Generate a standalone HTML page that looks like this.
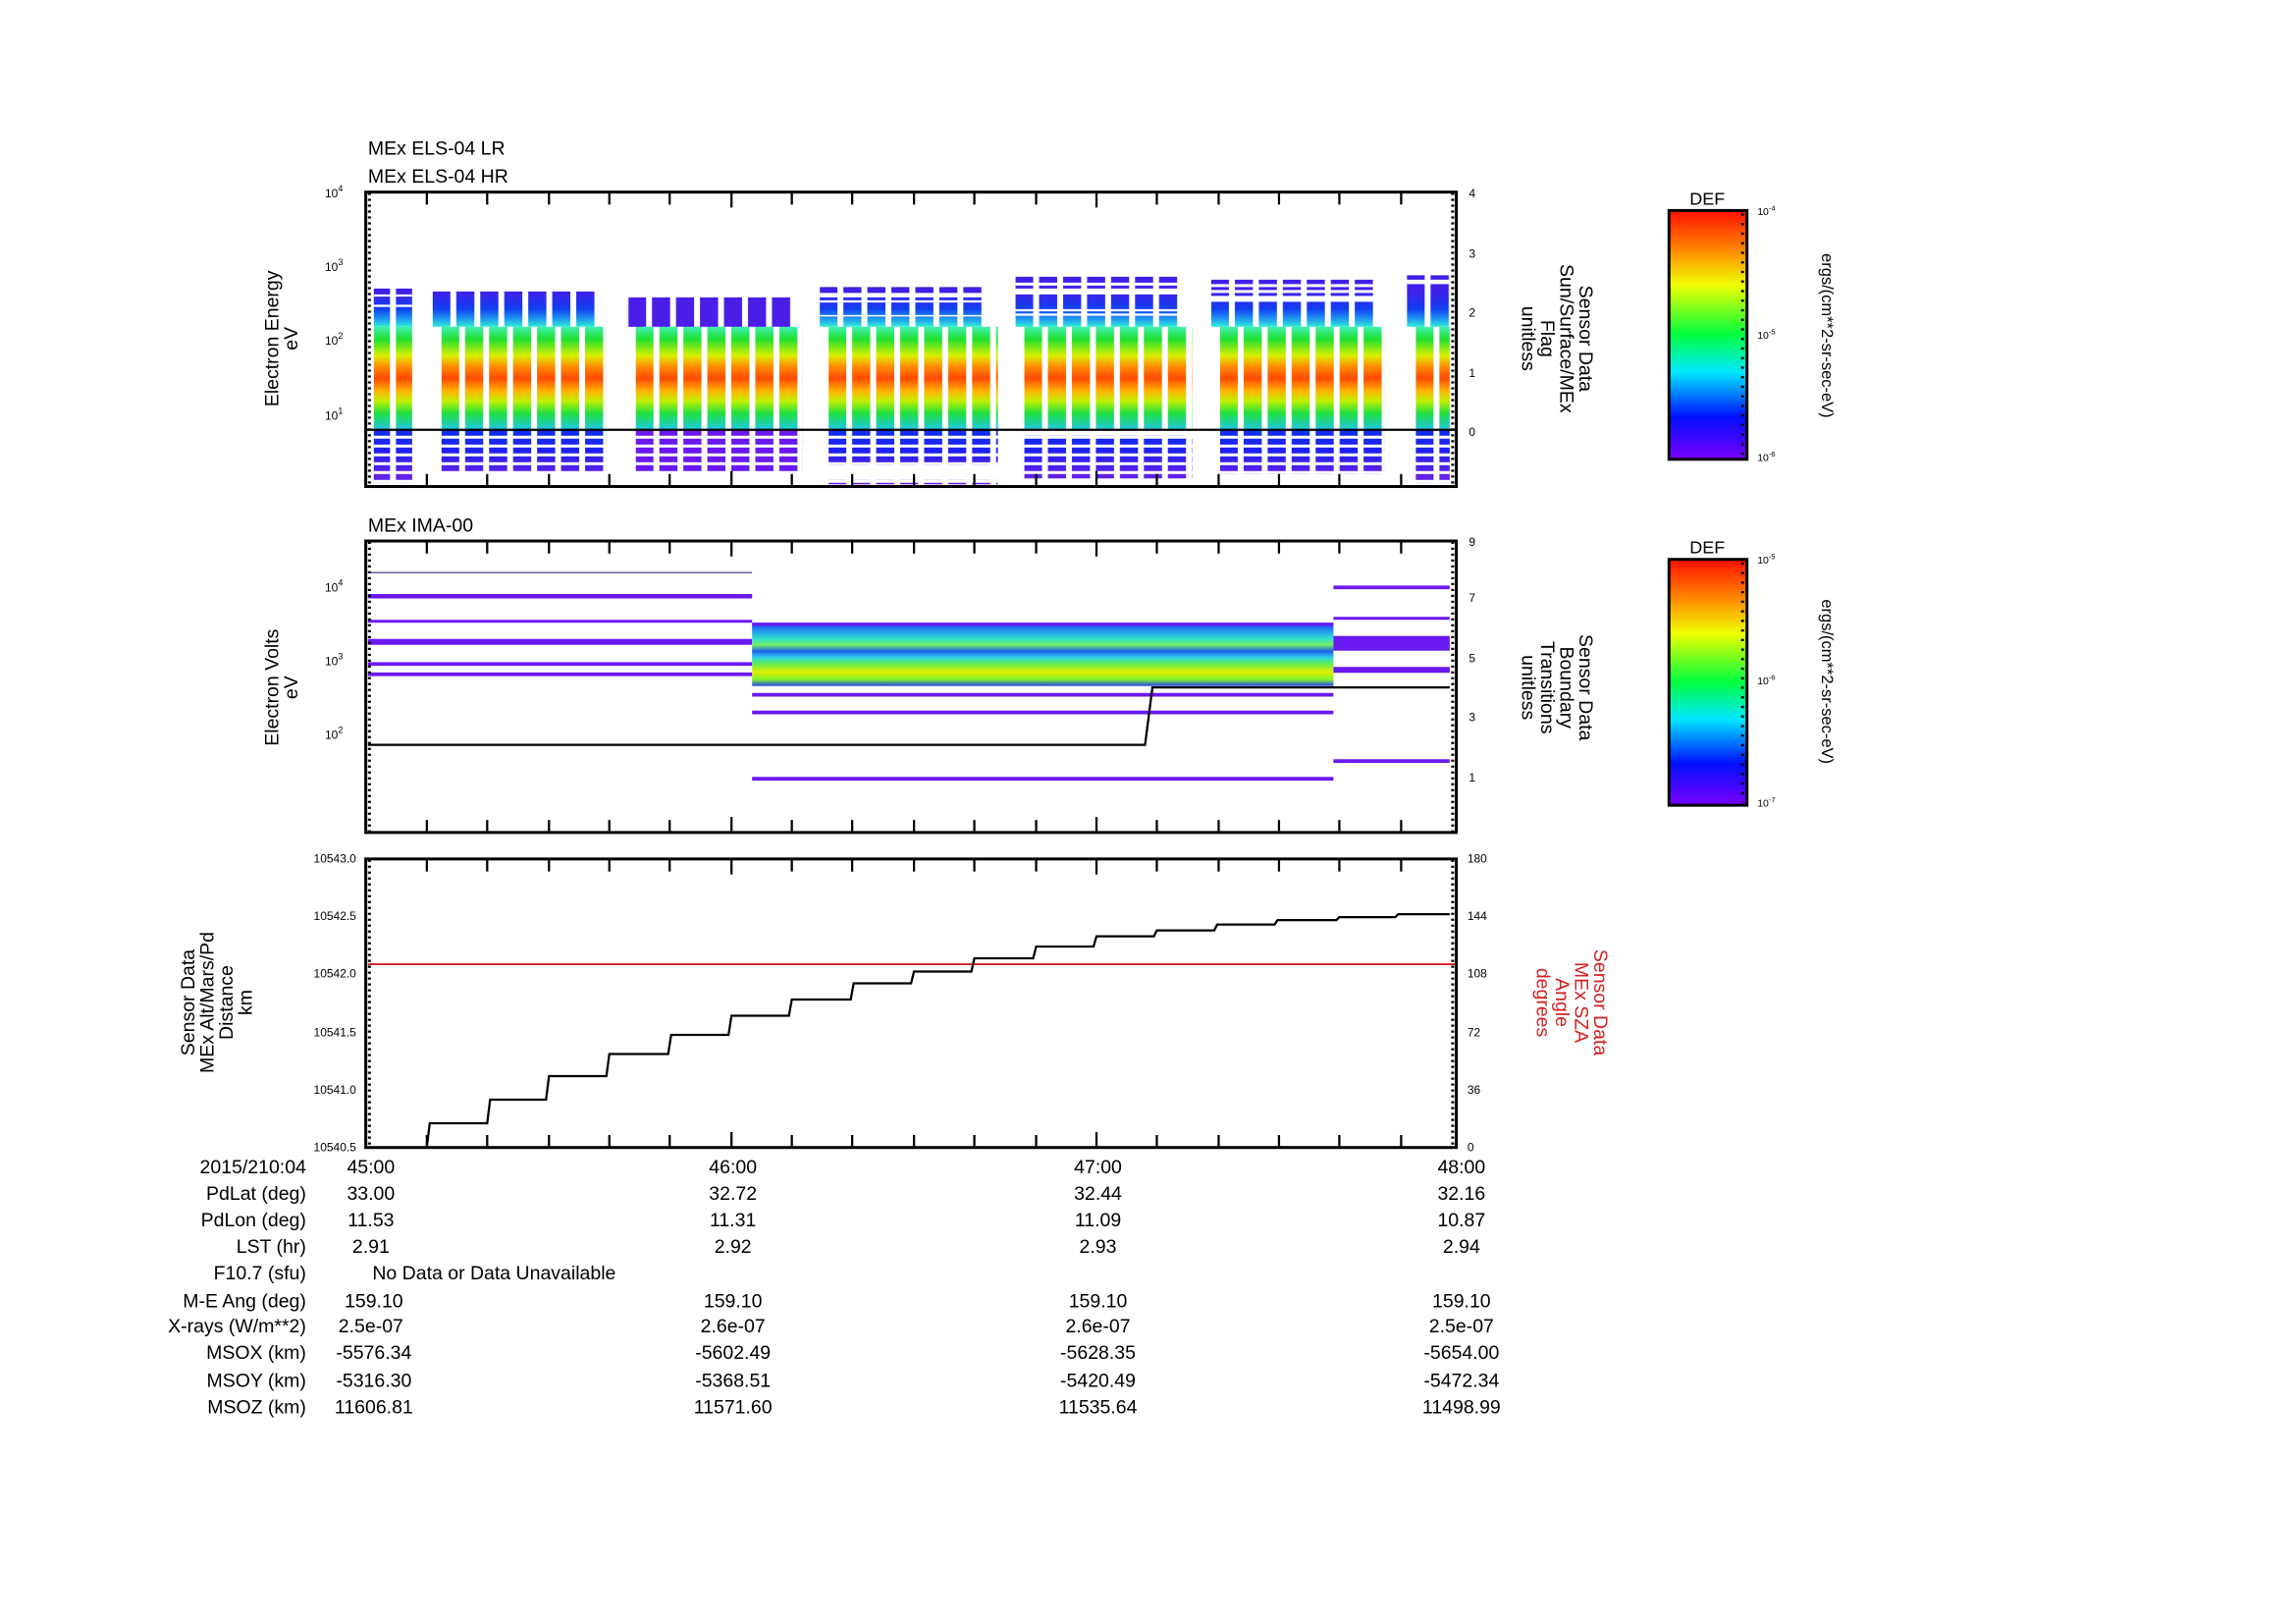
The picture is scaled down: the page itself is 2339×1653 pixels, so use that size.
<!DOCTYPE html>
<html><head><meta charset="utf-8"><style>
html,body{margin:0;padding:0;background:#fff;}
svg{display:block;}
text{font-family:"Liberation Sans",sans-serif;fill:#000;}
</style></head><body>
<svg width="2339" height="1653" viewBox="0 0 1560 1102.5" xmlns="http://www.w3.org/2000/svg">
<defs>
<linearGradient id="low" x1="0" y1="222" x2="0" y2="292" gradientUnits="userSpaceOnUse">
<stop offset="0" stop-color="#3ff0b0"/><stop offset="0.12" stop-color="#20e030"/><stop offset="0.28" stop-color="#d8f000"/><stop offset="0.38" stop-color="#ff9000"/><stop offset="0.5" stop-color="#ff4a00"/><stop offset="0.62" stop-color="#ffb000"/><stop offset="0.72" stop-color="#c0f000"/><stop offset="0.84" stop-color="#20e040"/><stop offset="1" stop-color="#20c8e8"/>
</linearGradient>
<linearGradient id="up" x1="0" y1="198" x2="0" y2="222" gradientUnits="userSpaceOnUse">
<stop offset="0" stop-color="#4020e8"/><stop offset="0.5" stop-color="#1040f0"/><stop offset="0.8" stop-color="#20a0f0"/><stop offset="1" stop-color="#30f0d0"/>
</linearGradient>
<linearGradient id="dn" x1="0" y1="292" x2="0" y2="322" gradientUnits="userSpaceOnUse">
<stop offset="0" stop-color="#1030f0"/><stop offset="0.5" stop-color="#2020f0"/><stop offset="1" stop-color="#6020e8"/>
</linearGradient>
<linearGradient id="mid" x1="0" y1="423" x2="0" y2="466" gradientUnits="userSpaceOnUse">
<stop offset="0" stop-color="#2030f0"/><stop offset="0.12" stop-color="#2090f0"/><stop offset="0.25" stop-color="#30e0d0"/><stop offset="0.35" stop-color="#70f060"/><stop offset="0.45" stop-color="#2060f0"/><stop offset="0.55" stop-color="#30d0e8"/><stop offset="0.65" stop-color="#60f050"/><stop offset="0.78" stop-color="#e0f000"/><stop offset="0.9" stop-color="#80f030"/><stop offset="1" stop-color="#2040f0"/>
</linearGradient>
<linearGradient id="cb" x1="0" y1="1" x2="0" y2="0">
<stop offset="0" stop-color="#7a00ff"/><stop offset="0.17" stop-color="#0010ff"/><stop offset="0.35" stop-color="#00e8ff"/><stop offset="0.5" stop-color="#00ff40"/><stop offset="0.7" stop-color="#f0ff00"/><stop offset="0.85" stop-color="#ff8000"/><stop offset="1" stop-color="#ff1000"/>
</linearGradient>
<pattern id="v1" x="254" y="0" width="16.3" height="10" patternUnits="userSpaceOnUse"><rect x="11" y="0" width="4" height="10" fill="#fff"/></pattern>
<pattern id="v2" x="294" y="0" width="16.3" height="10" patternUnits="userSpaceOnUse"><rect x="12" y="0" width="4" height="10" fill="#fff"/></pattern>
<pattern id="v3" x="300" y="0" width="16.3" height="10" patternUnits="userSpaceOnUse"><rect x="12" y="0" width="4" height="10" fill="#fff"/></pattern>
<pattern id="v4" x="427" y="0" width="16.3" height="10" patternUnits="userSpaceOnUse"><rect x="12" y="0" width="4" height="10" fill="#fff"/></pattern>
<pattern id="v5" x="432" y="0" width="16.3" height="10" patternUnits="userSpaceOnUse"><rect x="12" y="0" width="4" height="10" fill="#fff"/></pattern>
<pattern id="v6" x="557" y="0" width="16.3" height="10" patternUnits="userSpaceOnUse"><rect x="12" y="0" width="4" height="10" fill="#fff"/></pattern>
<pattern id="v7" x="563" y="0" width="16.3" height="10" patternUnits="userSpaceOnUse"><rect x="12" y="0" width="4" height="10" fill="#fff"/></pattern>
<pattern id="v8" x="690" y="0" width="16.3" height="10" patternUnits="userSpaceOnUse"><rect x="12" y="0" width="4" height="10" fill="#fff"/></pattern>
<pattern id="v9" x="696" y="0" width="16.3" height="10" patternUnits="userSpaceOnUse"><rect x="12" y="0" width="4" height="10" fill="#fff"/></pattern>
<pattern id="v10" x="823" y="0" width="16.3" height="10" patternUnits="userSpaceOnUse"><rect x="12" y="0" width="4" height="10" fill="#fff"/></pattern>
<pattern id="v11" x="829" y="0" width="16.3" height="10" patternUnits="userSpaceOnUse"><rect x="12" y="0" width="4" height="10" fill="#fff"/></pattern>
<pattern id="v12" x="956" y="0" width="16.3" height="10" patternUnits="userSpaceOnUse"><rect x="12" y="0" width="4" height="10" fill="#fff"/></pattern>
<pattern id="v13" x="962" y="0" width="16.3" height="10" patternUnits="userSpaceOnUse"><rect x="12" y="0" width="4" height="10" fill="#fff"/></pattern>
<pattern id="hg" x="0" y="292" width="10" height="6" patternUnits="userSpaceOnUse"><rect x="0" y="4" width="10" height="2" fill="#fff"/></pattern>
</defs>

<!-- Panel 1 -->
<text x="250" y="105" font-size="13">MEx ELS-04 LR</text>
<text x="250" y="124" font-size="13">MEx ELS-04 HR</text>
<g>
<rect x="254" y="222" width="26" height="70" fill="url(#low)"/>
<rect x="254" y="196" width="26" height="26" fill="url(#up)"/>
<rect x="254" y="292" width="26" height="36" fill="url(#dn)"/>
<rect x="300" y="222" width="112" height="70" fill="url(#low)"/>
<rect x="294" y="198" width="110" height="24" fill="url(#up)"/>
<rect x="300" y="292" width="112" height="29" fill="url(#dn)"/>
<rect x="432" y="222" width="113" height="70" fill="url(#low)"/>
<rect x="427" y="202" width="110" height="20" fill="#4a1ee8"/>
<rect x="432" y="292" width="113" height="29" fill="#6a18f0"/>
<rect x="563" y="222" width="115" height="70" fill="url(#low)"/>
<rect x="557" y="195" width="110" height="27" fill="url(#up)"/>
<rect x="563" y="292" width="115" height="24" fill="url(#dn)"/>
<rect x="563" y="326" width="115" height="3" fill="#6a18f0"/>
<rect x="696" y="222" width="114" height="70" fill="url(#low)"/>
<rect x="690" y="188" width="110" height="34" fill="url(#up)"/>
<rect x="696" y="296" width="114" height="29" fill="url(#dn)"/>
<rect x="829" y="222" width="112" height="70" fill="url(#low)"/>
<rect x="823" y="190" width="110" height="32" fill="url(#up)"/>
<rect x="829" y="292" width="112" height="30" fill="url(#dn)"/>
<rect x="962" y="222" width="23" height="70" fill="url(#low)"/>
<rect x="956" y="187" width="29" height="35" fill="url(#up)"/>
<rect x="962" y="292" width="23" height="36" fill="url(#dn)"/>
<!-- upper band gaps -->
<g fill="#fff">
<rect x="254" y="200" width="26" height="1.5"/><rect x="254" y="207" width="26" height="1.5"/>
<rect x="557" y="199" width="110" height="3"/><rect x="557" y="204" width="110" height="1.5"/><rect x="557" y="214" width="110" height="1"/>
<rect x="690" y="192" width="110" height="2"/><rect x="690" y="196" width="110" height="4"/><rect x="690" y="210" width="110" height="1.5"/><rect x="690" y="213" width="110" height="1.5"/>
<rect x="823" y="193" width="110" height="2"/><rect x="823" y="197" width="110" height="2"/><rect x="823" y="201" width="110" height="4"/>
<rect x="956" y="190" width="29" height="3"/>
</g>
<!-- lower dash gaps -->
<rect x="254" y="294" width="735" height="36" fill="url(#hg)"/>
<!-- vertical gaps per cluster -->
<rect x="254" y="185" width="26" height="145" fill="url(#v1)"/>
<rect x="294" y="185" width="110" height="37" fill="url(#v2)"/>
<rect x="300" y="222" width="112" height="108" fill="url(#v3)"/>
<rect x="427" y="185" width="110" height="37" fill="url(#v4)"/>
<rect x="432" y="222" width="113" height="108" fill="url(#v5)"/>
<rect x="557" y="185" width="110" height="37" fill="url(#v6)"/>
<rect x="563" y="222" width="115" height="108" fill="url(#v7)"/>
<rect x="690" y="185" width="110" height="37" fill="url(#v8)"/>
<rect x="696" y="222" width="114" height="108" fill="url(#v9)"/>
<rect x="823" y="185" width="110" height="37" fill="url(#v10)"/>
<rect x="829" y="222" width="112" height="108" fill="url(#v11)"/>
<rect x="956" y="185" width="29" height="37" fill="url(#v12)"/>
<rect x="962" y="222" width="23" height="108" fill="url(#v13)"/>
<line x1="249" y1="292" x2="990" y2="292" stroke="#000" stroke-width="1.5"/>
<rect x="248.5" y="130.5" width="741" height="200" fill="none" stroke="#000" stroke-width="2"/>
</g>
<g font-size="8">
<text x="233" y="134" text-anchor="end">10<tspan font-size="6" dy="-4">4</tspan></text>
<text x="233" y="184" text-anchor="end">10<tspan font-size="6" dy="-4">3</tspan></text>
<text x="233" y="234" text-anchor="end">10<tspan font-size="6" dy="-4">2</tspan></text>
<text x="233" y="285" text-anchor="end">10<tspan font-size="6" dy="-4">1</tspan></text>
<text x="998" y="134">4</text><text x="998" y="175">3</text><text x="998" y="215">2</text><text x="998" y="256">1</text><text x="998" y="296">0</text>
</g>
<text transform="translate(189,230) rotate(-90)" font-size="13" text-anchor="middle">Electron Energy</text>
<text transform="translate(202,230) rotate(-90)" font-size="13" text-anchor="middle">eV</text>
<g font-size="13" text-anchor="middle">
<text transform="translate(1073,230) rotate(90)">Sensor Data</text>
<text transform="translate(1060,230) rotate(90)">Sun/Surface/MEx</text>
<text transform="translate(1047,230) rotate(90)">Flag</text>
<text transform="translate(1034,230) rotate(90)">unitless</text>
</g>

<!-- Panel 2 -->
<text x="250" y="361" font-size="13">MEx IMA-00</text>
<g>
<line x1="250" y1="389" x2="511" y2="389" stroke="#7060a0" stroke-width="1"/>
<line x1="250" y1="405" x2="511" y2="405" stroke="#6a18f0" stroke-width="3"/>
<line x1="250" y1="422" x2="511" y2="422" stroke="#6a18f0" stroke-width="2"/>
<line x1="250" y1="436" x2="511" y2="436" stroke="#6a18f0" stroke-width="4"/>
<line x1="250" y1="451" x2="511" y2="451" stroke="#6a18f0" stroke-width="2.5"/>
<line x1="250" y1="458" x2="511" y2="458" stroke="#6a18f0" stroke-width="2.5"/>
<rect x="511" y="423" width="395" height="43" fill="url(#mid)"/>
<line x1="511" y1="424" x2="906" y2="424" stroke="#6a18f0" stroke-width="2"/>
<line x1="511" y1="472" x2="906" y2="472" stroke="#6a18f0" stroke-width="2.5"/>
<line x1="511" y1="484" x2="906" y2="484" stroke="#6a18f0" stroke-width="2.5"/>
<line x1="511" y1="529" x2="906" y2="529" stroke="#6a18f0" stroke-width="2.5"/>
<line x1="906" y1="399" x2="985" y2="399" stroke="#6a18f0" stroke-width="2.5"/>
<line x1="906" y1="420" x2="985" y2="420" stroke="#6a18f0" stroke-width="2"/>
<rect x="906" y="432" width="79" height="10" fill="#6a18f0"/>
<line x1="906" y1="455" x2="985" y2="455" stroke="#6a18f0" stroke-width="4"/>
<line x1="906" y1="517" x2="985" y2="517" stroke="#6a18f0" stroke-width="2.5"/>
<polyline points="250,506 778,506 783,467 985,467" fill="none" stroke="#000" stroke-width="1.5"/>
<rect x="248.5" y="367.5" width="741" height="198" fill="none" stroke="#000" stroke-width="2"/>
</g>
<g font-size="8">
<text x="233" y="402" text-anchor="end">10<tspan font-size="6" dy="-4">4</tspan></text>
<text x="233" y="452" text-anchor="end">10<tspan font-size="6" dy="-4">3</tspan></text>
<text x="233" y="502" text-anchor="end">10<tspan font-size="6" dy="-4">2</tspan></text>
<text x="998" y="371">9</text><text x="998" y="409">7</text><text x="998" y="450">5</text><text x="998" y="490">3</text><text x="998" y="531">1</text>
</g>
<text transform="translate(189,467) rotate(-90)" font-size="13" text-anchor="middle">Electron Volts</text>
<text transform="translate(202,467) rotate(-90)" font-size="13" text-anchor="middle">eV</text>
<g font-size="13" text-anchor="middle">
<text transform="translate(1073,467) rotate(90)">Sensor Data</text>
<text transform="translate(1060,467) rotate(90)">Boundary</text>
<text transform="translate(1047,467) rotate(90)">Transitions</text>
<text transform="translate(1034,467) rotate(90)">unitless</text>
</g>

<!-- Panel 3 -->
<line x1="250" y1="655" x2="990" y2="655" stroke="#d02020" stroke-width="1.2"/>
<polyline points="290,779 292,763 331,763 333,747 371,747 373,731 412,731 414,716 454,716 456,703 495,703 497,690 536,690 538,679 578,679 580,668 619,668 621,660 660,660 662,651 702,651 704,643 743,643 745,636 784,636 786,632 825,632 827,628 866,628 868,625 908,625 910,623 948,623 950,621 985,621" fill="none" stroke="#000" stroke-width="1.5"/>
<rect x="248.5" y="583.5" width="741" height="196" fill="none" stroke="#000" stroke-width="2"/>
<g font-size="8" text-anchor="end">
<text x="242" y="586">10543.0</text><text x="242" y="625">10542.5</text><text x="242" y="664">10542.0</text><text x="242" y="704">10541.5</text><text x="242" y="743">10541.0</text><text x="242" y="782">10540.5</text>
</g>
<g font-size="8">
<text x="997" y="586">180</text><text x="997" y="625">144</text><text x="997" y="664">108</text><text x="997" y="704">72</text><text x="997" y="743">36</text><text x="997" y="782">0</text>
</g>
<g font-size="13" text-anchor="middle">
<text transform="translate(132,681) rotate(-90)">Sensor Data</text>
<text transform="translate(145,681) rotate(-90)">MEx Alt/Mars/Pd</text>
<text transform="translate(158,681) rotate(-90)">Distance</text>
<text transform="translate(171,681) rotate(-90)">km</text>
</g>
<g font-size="13" text-anchor="middle">
<text transform="translate(1083,681) rotate(90)" style="fill:#d02020">Sensor Data</text>
<text transform="translate(1070,681) rotate(90)" style="fill:#d02020">MEx SZA</text>
<text transform="translate(1057,681) rotate(90)" style="fill:#d02020">Angle</text>
<text transform="translate(1044,681) rotate(90)" style="fill:#d02020">degrees</text>
</g>

<!-- ticks -->
<g stroke="#000" stroke-width="1.5">
<path d="M290 131v8M331 131v8M373 131v8M414 131v8M455 131v8M497 131v10M538 131v8M579 131v8M621 131v8M662 131v8M704 131v8M745 131v10M786 131v8M828 131v8M869 131v8M910 131v8M952 131v8
M290 330v-8M331 330v-8M373 330v-8M414 330v-8M455 330v-8M497 330v-10M538 330v-8M579 330v-8M621 330v-8M662 330v-8M704 330v-8M745 330v-10M786 330v-8M828 330v-8M869 330v-8M910 330v-8M952 330v-8"/>
<path d="M290 368v8M331 368v8M373 368v8M414 368v8M455 368v8M497 368v10M538 368v8M579 368v8M621 368v8M662 368v8M704 368v8M745 368v10M786 368v8M828 368v8M869 368v8M910 368v8M952 368v8
M290 565v-8M331 565v-8M373 565v-8M414 565v-8M455 565v-8M497 565v-10M538 565v-8M579 565v-8M621 565v-8M662 565v-8M704 565v-8M745 565v-10M786 565v-8M828 565v-8M869 565v-8M910 565v-8M952 565v-8"/>
<path d="M290 584v8M331 584v8M373 584v8M414 584v8M455 584v8M497 584v10M538 584v8M579 584v8M621 584v8M662 584v8M704 584v8M745 584v10M786 584v8M828 584v8M869 584v8M910 584v8M952 584v8
M290 779v-8M331 779v-8M373 779v-8M414 779v-8M455 779v-8M497 779v-10M538 779v-8M579 779v-8M621 779v-8M662 779v-8M704 779v-8M745 779v-10M786 779v-8M828 779v-8M869 779v-8M910 779v-8M952 779v-8"/>
</g>
<g stroke="#000" stroke-width="2" stroke-dasharray="1.5 2.5">
<line x1="251" y1="131" x2="251" y2="330"/><line x1="987" y1="131" x2="987" y2="330"/>
<line x1="251" y1="368" x2="251" y2="565"/><line x1="987" y1="368" x2="987" y2="565"/>
<line x1="251" y1="584" x2="251" y2="779"/><line x1="987" y1="584" x2="987" y2="779"/>
</g>

<!-- Table -->
<g font-size="13">
<g text-anchor="end">
<text x="208" y="797">2015/210:04</text>
<text x="208" y="815">PdLat (deg)</text>
<text x="208" y="833">PdLon (deg)</text>
<text x="208" y="851">LST (hr)</text>
<text x="208" y="869">F10.7 (sfu)</text>
<text x="208" y="888">M-E Ang (deg)</text>
<text x="208" y="905">X-rays (W/m**2)</text>
<text x="208" y="923">MSOX (km)</text>
<text x="208" y="942">MSOY (km)</text>
<text x="208" y="960">MSOZ (km)</text>
</g>
<g text-anchor="middle">
<text x="252" y="797">45:00</text><text x="498" y="797">46:00</text><text x="746" y="797">47:00</text><text x="993" y="797">48:00</text>
<text x="252" y="815">33.00</text><text x="498" y="815">32.72</text><text x="746" y="815">32.44</text><text x="993" y="815">32.16</text>
<text x="252" y="833">11.53</text><text x="498" y="833">11.31</text><text x="746" y="833">11.09</text><text x="993" y="833">10.87</text>
<text x="252" y="851">2.91</text><text x="498" y="851">2.92</text><text x="746" y="851">2.93</text><text x="993" y="851">2.94</text>
<text x="254" y="888">159.10</text><text x="498" y="888">159.10</text><text x="746" y="888">159.10</text><text x="993" y="888">159.10</text>
<text x="252" y="905">2.5e-07</text><text x="498" y="905">2.6e-07</text><text x="746" y="905">2.6e-07</text><text x="993" y="905">2.5e-07</text>
<text x="254" y="923">-5576.34</text><text x="498" y="923">-5602.49</text><text x="746" y="923">-5628.35</text><text x="993" y="923">-5654.00</text>
<text x="254" y="942">-5316.30</text><text x="498" y="942">-5368.51</text><text x="746" y="942">-5420.49</text><text x="993" y="942">-5472.34</text>
<text x="254" y="960">11606.81</text><text x="498" y="960">11571.60</text><text x="746" y="960">11535.64</text><text x="993" y="960">11498.99</text>
</g>
<text x="253" y="869">No Data or Data Unavailable</text>
</g>

<!-- Colorbars -->
<text x="1160" y="139" font-size="12" text-anchor="middle">DEF</text>
<rect x="1134" y="143" width="53" height="169" fill="url(#cb)" stroke="#000" stroke-width="2"/>
<line x1="1184" y1="145" x2="1184" y2="310" stroke="#000" stroke-width="2" stroke-dasharray="1.5 5"/>
<g font-size="7"><text x="1194" y="146">10<tspan font-size="5" dy="-3">-4</tspan></text><text x="1194" y="230">10<tspan font-size="5" dy="-3">-5</tspan></text><text x="1194" y="313">10<tspan font-size="5" dy="-3">-6</tspan></text></g>
<text transform="translate(1238,228) rotate(90)" font-size="11" text-anchor="middle">ergs/(cm**2-sr-sec-eV)</text>

<text x="1160" y="376" font-size="12" text-anchor="middle">DEF</text>
<rect x="1134" y="380" width="53" height="167" fill="url(#cb)" stroke="#000" stroke-width="2"/>
<line x1="1184" y1="382" x2="1184" y2="545" stroke="#000" stroke-width="2" stroke-dasharray="1.5 5"/>
<g font-size="7"><text x="1194" y="383">10<tspan font-size="5" dy="-3">-5</tspan></text><text x="1194" y="465">10<tspan font-size="5" dy="-3">-6</tspan></text><text x="1194" y="548">10<tspan font-size="5" dy="-3">-7</tspan></text></g>
<text transform="translate(1238,463) rotate(90)" font-size="11" text-anchor="middle">ergs/(cm**2-sr-sec-eV)</text>
</svg>
</body></html>
